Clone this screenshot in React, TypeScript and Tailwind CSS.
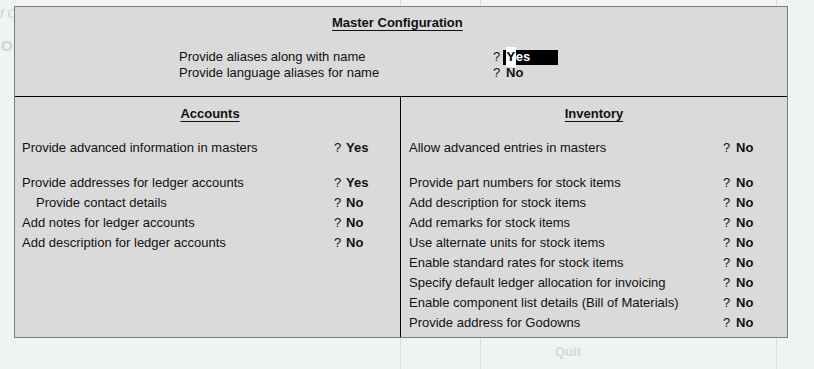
type Row = { label: string; value: string; indent?: boolean; gapBefore?: boolean };

const accounts: Row[] = [
  { label: "Provide advanced information in masters", value: "Yes" },
  { label: "Provide addresses for ledger accounts", value: "Yes", gapBefore: true },
  { label: "Provide contact details", value: "No", indent: true },
  { label: "Add notes for ledger accounts", value: "No" },
  { label: "Add description for ledger accounts", value: "No" },
];

const inventory: Row[] = [
  { label: "Allow advanced entries in masters", value: "No" },
  { label: "Provide part numbers for stock items", value: "No", gapBefore: true },
  { label: "Add description for stock items", value: "No" },
  { label: "Add remarks for stock items", value: "No" },
  { label: "Use alternate units for stock items", value: "No" },
  { label: "Enable standard rates for stock items", value: "No" },
  { label: "Specify default ledger allocation for invoicing", value: "No" },
  { label: "Enable component list details (Bill of Materials)", value: "No" },
  { label: "Provide address for Godowns", value: "No" },
];

const AccountRow = ({ row }: { row: Row }) => (
  <div className={`flex h-5 items-center ${row.gapBefore ? "mt-[15px]" : ""}`}>
    <span className={`w-[312px] ${row.indent ? "pl-[14px]" : ""}`}>{row.label}</span>
    <span className="w-[12px]">?</span>
    <span className="font-bold">{row.value}</span>
  </div>
);

const InventoryRow = ({ row }: { row: Row }) => (
  <div className={`flex h-5 items-center ${row.gapBefore ? "mt-[15px]" : ""}`}>
    <span className="w-[314px]">{row.label}</span>
    <span className="w-[13px]">?</span>
    <span className="font-bold">{row.value}</span>
  </div>
);

export default function App() {
  return (
    <div className="relative w-[814px] h-[369px] overflow-hidden bg-[#eef4f4] pl-[14px] pt-[6px] font-['Liberation_Sans',Arial,sans-serif] text-[13px] text-[#111]">
      {/* faint window behind the dialog */}
      <div className="absolute left-[400px] top-0 h-full w-px bg-[#d9dfdf]" />
      <div className="absolute left-[480px] top-0 h-full w-px bg-[#d9dfdf]" />
      <div className="absolute left-[776px] top-0 h-full w-px bg-[#d9dfdf]" />
      <span className="absolute left-0 top-[4px] italic text-[#ccd3d3]">f C</span>
      <span className="absolute left-[1px] top-[35px] text-[15px] font-bold text-[#cdd2d2]">O</span>
      <span className="absolute left-[555px] top-[342px] font-bold text-[#d3d8d8]">Quit</span>

      <div className="relative z-10 flex h-[332px] w-[774px] flex-col border border-[#7a7a7a] bg-[#dadada]">
        <div className="h-[90px] border-b border-black pt-[8px]">
          <div className="pl-[317px] leading-4">
            <span className="font-bold underline underline-offset-[3px]">Master Configuration</span>
          </div>
          <div className="mt-[18px] flex h-4 items-center pl-[164px]">
            <span className="w-[314px]">Provide aliases along with name</span>
            <span className="w-[10px]">?</span>
            <span className="flex h-[15px] w-[55px] items-center bg-black pl-[3px] font-bold text-white">
              <span className="bg-white px-[0.5px] text-black">Y</span>es
            </span>
          </div>
          <div className="flex h-4 items-center pl-[164px]">
            <span className="w-[314px]">Provide language aliases for name</span>
            <span className="w-[13px]">?</span>
            <span className="font-bold">No</span>
          </div>
        </div>

        <div className="flex flex-1">
          <div className="w-[386px] border-r border-black pl-[7px] pt-[7px]">
            <div className="mb-[14px] h-5 pr-[2px] text-center leading-5">
              <span className="font-bold underline underline-offset-[3px]">Accounts</span>
            </div>
            {accounts.map((r) => (
              <AccountRow key={r.label} row={r} />
            ))}
          </div>
          <div className="flex-1 pl-[8px] pt-[7px]">
            <div className="mb-[14px] h-5 pr-[8px] text-center leading-5">
              <span className="font-bold underline underline-offset-[3px]">Inventory</span>
            </div>
            {inventory.map((r) => (
              <InventoryRow key={r.label} row={r} />
            ))}
          </div>
        </div>
      </div>
    </div>
  );
}
